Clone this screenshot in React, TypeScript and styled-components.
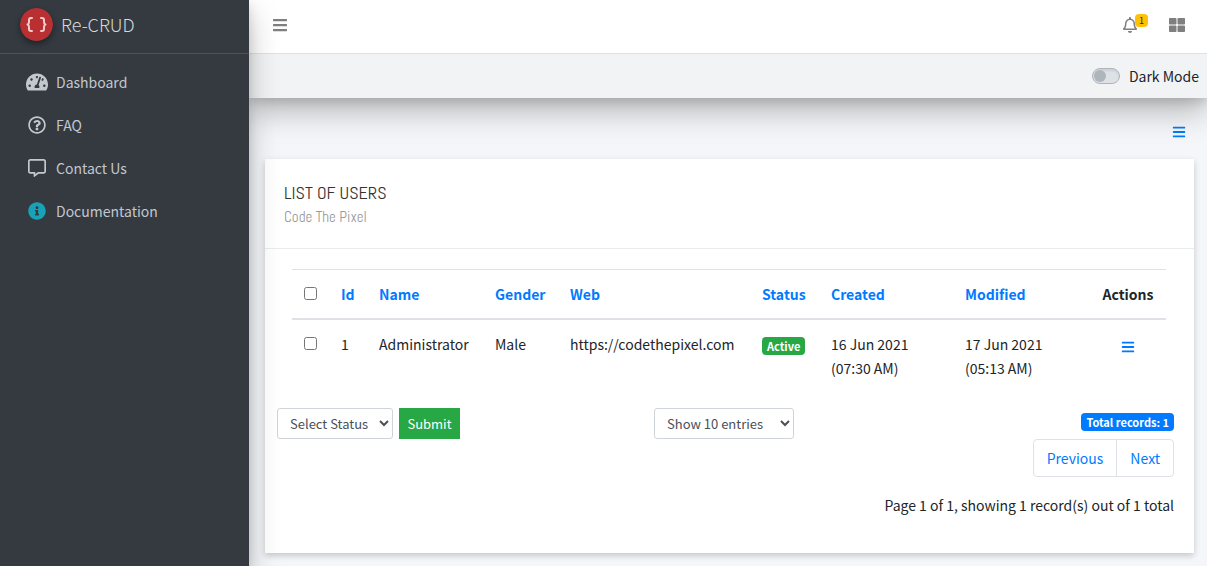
import React from "react";
import styled, { createGlobalStyle } from "styled-components";
import {
  FaBars,
  FaInfoCircle,
  FaRegBell,
  FaRegCommentAlt,
  FaRegQuestionCircle,
  FaTachometerAlt,
  FaThLarge,
} from "react-icons/fa";

const sans = `"Source Sans Pro", "Noto Sans CJK SC", "Noto Sans", sans-serif`;
const narrow = `Abel, "Liberation Sans Narrow", "Liberation Sans", sans-serif`;
const deepShadow = "0 14px 28px rgba(0, 0, 0, 0.25), 0 4px 10px rgba(0, 0, 0, 0.12)";

const GlobalStyle = createGlobalStyle`
  *, *::before, *::after { box-sizing: border-box; }
  body {
    margin: 0;
    background: #f4f6f9;
    color: #212529;
    font-family: ${sans};
    font-size: 14px;
    font-weight: 400;
    line-height: 24px;
  }
  a { color: #007bff; text-decoration: none; }
  button, select, input { font-family: inherit; margin: 0; }
`;

const Shell = styled.div`
  display: flex;
  min-height: 100vh;
`;

const Sidebar = styled.aside`
  flex: 0 0 249px;
  background: #343a40;
  box-shadow: ${deepShadow};
  z-index: 3;
`;

const Brand = styled.a`
  display: flex;
  align-items: center;
  gap: 8px;
  height: 54px;
  padding: 0 20px 5px;
  border-bottom: 1px solid #4b545c;
  font-size: 18px;
  font-weight: 300;
  && { color: #d6d8d9; }
`;

const Logo = styled.svg`
  width: 33px;
  height: 33px;
  border-radius: 50%;
  box-shadow: 0 3px 6px rgba(0, 0, 0, 0.4);
`;

const Menu = styled.nav`
  display: flex;
  flex-direction: column;
  gap: 3px;
  padding: 8px;
`;

const MenuLink = styled.a<{ $tint?: string }>`
  display: flex;
  align-items: center;
  gap: 8px;
  height: 40px;
  padding: 0 18px;
  && { color: #c2c7d0; }
  svg {
    flex: none;
    width: 22px;
    color: ${(p) => p.$tint ?? "inherit"};
  }
`;

const Main = styled.div`
  flex: 1;
  min-width: 0;
  display: flex;
  flex-direction: column;
`;

const TopBars = styled.header`
  box-shadow: ${deepShadow};
  z-index: 2;
`;

const Navbar = styled.div`
  display: flex;
  align-items: center;
  justify-content: space-between;
  height: 54px;
  padding: 0 22px 4px 23px;
  background: #fff;
  border-bottom: 1px solid #dee2e6;
`;

const NavActions = styled.div`
  display: flex;
  gap: 31px;
`;

const IconButton = styled.button<{ $color: string }>`
  position: relative;
  display: flex;
  align-items: center;
  justify-content: center;
  padding: 0;
  border: 0;
  background: none;
  color: ${(p) => p.$color};
  cursor: pointer;
`;

const Counter = styled.span`
  position: absolute;
  top: -3px;
  right: -10px;
  width: 13px;
  height: 13px;
  border-radius: 4px;
  background: #ffc107;
  color: #1f2d3d;
  font-size: 9px;
  line-height: 13px;
  text-align: center;
`;

const ModeBar = styled.div`
  display: flex;
  align-items: center;
  justify-content: flex-end;
  height: 44px;
  padding: 0 8px;
  background: #f2f3f5;
`;

const ModeLabel = styled.label`
  display: flex;
  align-items: center;
  gap: 9px;
`;

const Switch = styled.input`
  appearance: none;
  display: flex;
  align-items: center;
  width: 28px;
  height: 16px;
  padding: 0 1px;
  border: 1px solid #adb5bd;
  border-radius: 8px;
  background: #dee2e6;
  box-shadow: inset 0 2px 2px rgba(0, 0, 0, 0.08);
  &::before {
    content: "";
    width: 12px;
    height: 12px;
    border-radius: 50%;
    background: #adb5bd;
  }
  &:checked { justify-content: flex-end; background: #007bff; }
`;

const Tools = styled.div`
  display: flex;
  justify-content: flex-end;
  padding: 27px 21px 20px;
`;

const Card = styled.section`
  flex: 1;
  margin: 0 13px 13px 16px;
  background: #fff;
  box-shadow: 0 3px 6px rgba(0, 0, 0, 0.14), 0 2px 8px rgba(0, 0, 0, 0.06);
`;

const CardHeader = styled.div`
  height: 90px;
  padding: 22px 19px 0;
  border-bottom: 1px solid #e9ecef;
  font-family: ${narrow};
`;

const Title = styled.h1`
  margin: 0;
  color: #333;
  font-size: 18px;
  font-weight: 400;
  line-height: 24px;
`;

const Subtitle = styled.p`
  margin: 0;
  color: #999;
  font-size: 15px;
`;

const CardBody = styled.div`
  padding: 20px 20px 35px 12px;
`;

const TableWrap = styled.div`
  padding: 0 8px 0 15px;
`;

const Table = styled.table`
  width: 100%;
  table-layout: fixed;
  border-collapse: separate;
  border-spacing: 0;
  th, td {
    padding: 12px;
    text-align: left;
    vertical-align: top;
    border-top: 1px solid #dee2e6;
  }
  th { font-weight: 700; border-bottom: 2px solid #dee2e6; white-space: nowrap; }
  td { border-top: 0; }
  th:last-child, td:last-child { text-align: center; }
`;

const Check = styled.input`
  display: block;
  width: 13px;
  height: 13px;
  && { margin: 5px 0 0; }
`;

const RowAction = styled(IconButton)`
  width: 100%;
  height: 30px;
`;

const Badge = styled.span<{ $color: string }>`
  display: inline-block;
  padding: 0 5px;
  border-radius: 4px;
  background: ${(p) => p.$color};
  color: #fff;
  font-size: 11px;
  font-weight: 700;
  line-height: 18px;
  white-space: nowrap;
`;

const StatusBadge = styled(Badge)`
  display: block;
  width: max-content;
  margin-top: 5px;
`;

const Footer = styled.div`
  display: grid;
  grid-template-columns: 377fr 520fr;
  align-items: start;
  margin-top: 16px;
`;

const Group = styled.div`
  display: flex;
  gap: 6px;
  justify-content: space-between;
`;

const BulkForm = styled.form`
  display: flex;
  gap: 6px;
`;

const Select = styled.select<{ $width: number }>`
  width: ${(p) => p.$width}px;
  height: 31px;
  padding: 4px 0 4px 8px;
  border: 1px solid #ced4da;
  border-radius: 3px;
  background: #fff;
  color: #495057;
  font-size: 13px;
  line-height: 21px;
`;

const Submit = styled.button`
  height: 31px;
  width: 61px;
  padding: 0;
  border: 1px solid #28a745;
  background: #28a745;
  color: #fff;
  font-size: 13px;
  line-height: 21px;
`;

const Paging = styled.div`
  display: flex;
  flex-direction: column;
  align-items: flex-end;
  padding-top: 5px;
`;

const Pages = styled.nav`
  display: flex;
  margin: 8px 0 16px;
  border: 1px solid #dee2e6;
  border-radius: 4px;
`;

const PageLink = styled.a`
  height: 36px;
  padding: 0 13px;
  line-height: 36px;
  & + & { border-left: 1px solid #dee2e6; }
`;

const columnWidths = [37, 38, 116, 75, 192, 69, 134, 137, 76];
const sortable = ["Id", "Name", "Gender", "Web", "Status", "Created", "Modified"];

export default function App() {
  return (
    <Shell>
      <GlobalStyle />
      <Sidebar>
        <Brand href="#">
          <Logo viewBox="0 0 33 33" aria-hidden="true">
            <circle cx="16.5" cy="16.5" r="16.5" fill="#b92f32" />
            <g fill="none" stroke="#f1cccc" strokeWidth="2" strokeLinecap="round" strokeLinejoin="round">
              <path d="M12 10h-1q-2 0-2 2v2q0 2-1.500 2.500q1.500 .5 1.500 2.500v2q0 2 2 2h1" />
              <path d="M21 10h1q2 0 2 2v2q0 2 1.500 2.500q-1.500 .5-1.500 2.500v2q0 2-2 2h-1" />
            </g>
          </Logo>
          Re-CRUD
        </Brand>
        <Menu>
          <MenuLink href="#"><FaTachometerAlt size={20} />Dashboard</MenuLink>
          <MenuLink href="#"><FaRegQuestionCircle size={18} />FAQ</MenuLink>
          <MenuLink href="#"><FaRegCommentAlt size={18} />Contact Us</MenuLink>
          <MenuLink href="#" $tint="#17a2b8"><FaInfoCircle size={18} />Documentation</MenuLink>
        </Menu>
      </Sidebar>
      <Main>
        <TopBars>
          <Navbar>
            <IconButton $color="#7f7f7f" aria-label="Toggle menu"><FaBars size={16} /></IconButton>
            <NavActions>
              <IconButton $color="#7f7f7f" aria-label="Notifications">
                <FaRegBell size={16} />
                <Counter>1</Counter>
              </IconButton>
              <IconButton $color="#7f7f7f" aria-label="Apps"><FaThLarge size={16} /></IconButton>
            </NavActions>
          </Navbar>
          <ModeBar>
            <ModeLabel><Switch type="checkbox" />Dark Mode</ModeLabel>
          </ModeBar>
        </TopBars>
        <Tools>
          <IconButton $color="#007bff" aria-label="Page actions"><FaBars size={14} /></IconButton>
        </Tools>
        <Card>
          <CardHeader>
            <Title>LIST OF USERS</Title>
            <Subtitle>Code The Pixel</Subtitle>
          </CardHeader>
          <CardBody>
            <TableWrap>
              <Table>
                <colgroup>
                  {columnWidths.map((w, i) => <col key={i} width={w} />)}
                </colgroup>
                <thead>
                  <tr>
                    <th><Check type="checkbox" aria-label="Select all" /></th>
                    {sortable.map((name) => <th key={name}><a href="#">{name}</a></th>)}
                    <th>Actions</th>
                  </tr>
                </thead>
                <tbody>
                  <tr>
                    <td><Check type="checkbox" aria-label="Select Administrator" /></td>
                    <td>1</td>
                    <td>Administrator</td>
                    <td>Male</td>
                    <td>https://codethepixel.com</td>
                    <td><StatusBadge $color="#28a745">Active</StatusBadge></td>
                    <td>16 Jun 2021 (07:30 AM)</td>
                    <td>17 Jun 2021 (05:13 AM)</td>
                    <td><RowAction $color="#007bff" aria-label="Row actions"><FaBars size={14} /></RowAction></td>
                  </tr>
                </tbody>
              </Table>
            </TableWrap>
            <Footer>
              <BulkForm>
                <Select $width={116} aria-label="Status"><option>Select Status</option></Select>
                <Submit type="button">Submit</Submit>
              </BulkForm>
              <Group>
                <Select $width={140} aria-label="Entries per page"><option>Show 10 entries</option></Select>
                <Paging>
                  <Badge $color="#007bff">Total records: 1</Badge>
                  <Pages>
                    <PageLink href="#">Previous</PageLink>
                    <PageLink href="#">Next</PageLink>
                  </Pages>
                  <span>Page 1 of 1, showing 1 record(s) out of 1 total</span>
                </Paging>
              </Group>
            </Footer>
          </CardBody>
        </Card>
      </Main>
    </Shell>
  );
}
